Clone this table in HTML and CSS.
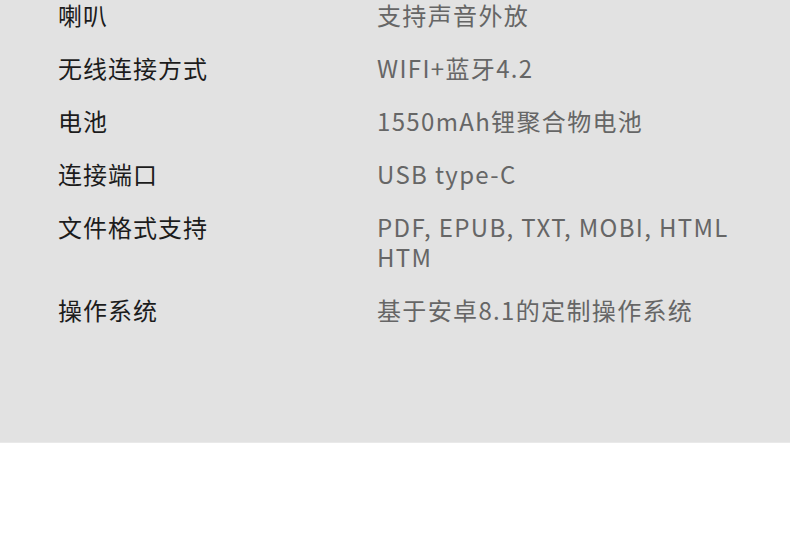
FILE: index.html
```html
<!DOCTYPE html>
<html lang="zh-CN">
<head>
    <meta charset="UTF-8">
    <meta name="viewport" content="width=device-width, initial-scale=1.0">
    <title>规格参数</title>
    <link rel="stylesheet" href="styles.css">
</head>
<body>
    <div class="spec-panel">
        <div class="spec-list">
            <div class="spec-row">
                <span class="spec-label">喇叭</span>
                <span class="spec-value">支持声音外放</span>
            </div>
            <div class="spec-row">
                <span class="spec-label">无线连接方式</span>
                <span class="spec-value">WIFI+蓝牙4.2</span>
            </div>
            <div class="spec-row">
                <span class="spec-label">电池</span>
                <span class="spec-value">1550mAh锂聚合物电池</span>
            </div>
            <div class="spec-row">
                <span class="spec-label">连接端口</span>
                <span class="spec-value">USB type-C</span>
            </div>
            <div class="spec-row">
                <span class="spec-label">文件格式支持</span>
                <span class="spec-value">PDF, EPUB, TXT, MOBI, HTML HTM</span>
            </div>
            <div class="spec-row">
                <span class="spec-label">操作系统</span>
                <span class="spec-value">基于安卓8.1的定制操作系统</span>
            </div>
        </div>
    </div>
</body>
</html>
```

FILE: styles.css
```css
body {
    margin: 0;
    background: #ffffff;
    font-family: "Noto Sans CJK SC", "Noto Sans", sans-serif;
}
.spec-panel {
    height: 443px;
    box-sizing: border-box;
    padding: 0 0 0 58px;
    background: #e2e2e2;
    border-bottom: 1px solid #e9e9e9;
}
.spec-list {
    display: flex;
    flex-direction: column;
    gap: 23px;
}
.spec-row {
    display: grid;
    grid-template-columns: 319px 370px;
    font-size: 24px;
    line-height: 30px;
    letter-spacing: 1px;
}
.spec-label {
    color: #1c1c1c;
}
.spec-value {
    color: #666666;
    letter-spacing: 1.35px;
}
```
